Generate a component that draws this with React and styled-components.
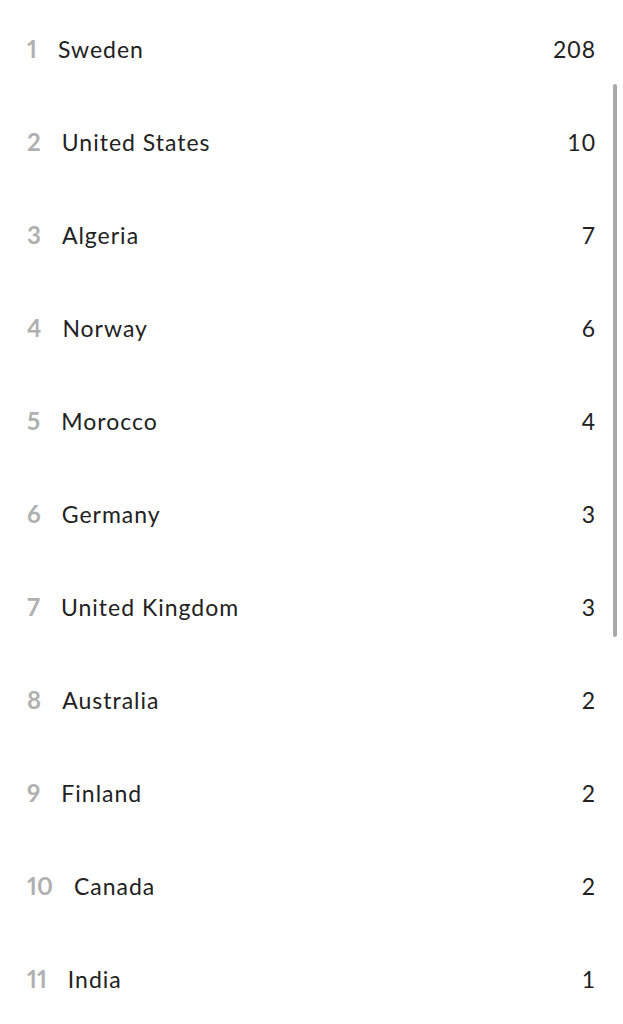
import React from 'react'
import styled, { createGlobalStyle } from 'styled-components'

const GlobalStyle = createGlobalStyle`
  html, body {
    margin: 0;
    padding: 0;
    background: #fff;
    overflow: hidden;
  }
`

const Wrapper = styled.div`
  position: relative;
  width: 623px;
  height: 1024px;
  overflow: hidden;
  font-family: Lato, "Noto Sans", sans-serif;
`

const List = styled.ol`
  margin: 0;
  padding: 2px 27px 0 27px;
  list-style: none;
`

const Row = styled.li`
  display: flex;
  align-items: center;
  height: 93px;
`

const Rank = styled.span`
  color: #b0b0b0;
  font-size: 24px;
  font-weight: 700;
  font-variant-numeric: proportional-nums;
  margin-right: 21px;
`

const Name = styled.span`
  flex: 1;
  color: #222;
  font-size: 23px;
  letter-spacing: 1px;
`

const Count = styled.span`
  color: #222;
  font-size: 23px;
  letter-spacing: 1px;
`

const Scrollbar = styled.div`
  position: absolute;
  right: 6px;
  top: 84px;
  width: 4px;
  height: 553px;
  border-radius: 2px;
  background: #a9a9a9;
`

const countries = [
  ['Sweden', 208],
  ['United States', 10],
  ['Algeria', 7],
  ['Norway', 6],
  ['Morocco', 4],
  ['Germany', 3],
  ['United Kingdom', 3],
  ['Australia', 2],
  ['Finland', 2],
  ['Canada', 2],
  ['India', 1],
]

export default function App() {
  return (
    <Wrapper>
      <GlobalStyle />
      <List>
        {countries.map(([name, count], i) => (
          <Row key={name}>
            <Rank>{i + 1}</Rank>
            <Name>{name}</Name>
            <Count>{count}</Count>
          </Row>
        ))}
      </List>
      <Scrollbar />
    </Wrapper>
  )
}
